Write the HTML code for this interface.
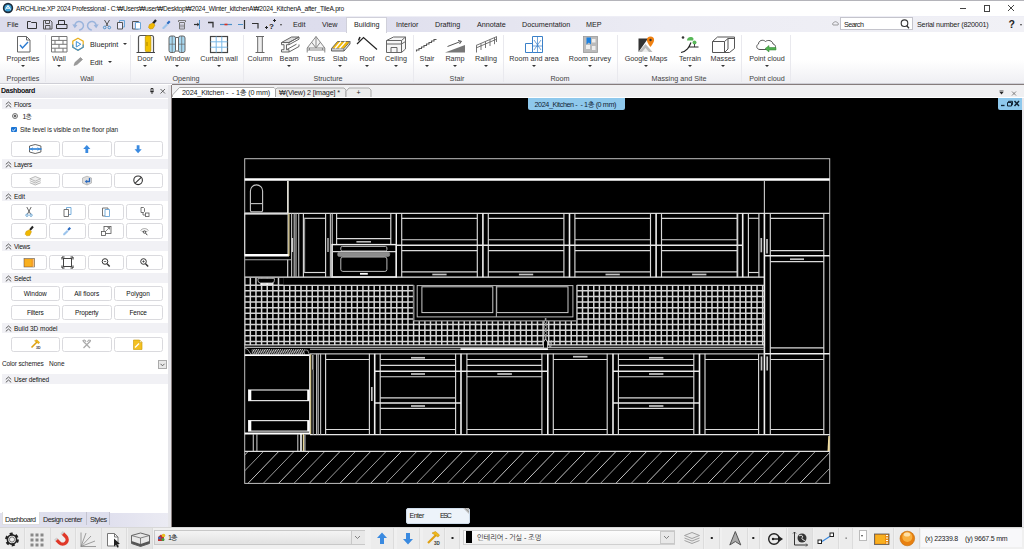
<!DOCTYPE html>
<html><head><meta charset="utf-8">
<style>
*{box-sizing:border-box;margin:0;padding:0}
html,body{width:1024px;height:549px;overflow:hidden;background:#fff}
body{font-family:"Liberation Sans","NanumGothic","Noto Sans CJK KR",sans-serif;font-size:7.2px;color:#222;position:relative}
.abs{position:absolute}
#title{left:0;top:0;width:1024px;height:16px;background:#fff;border-top:1px solid #b4b4ba}
#title .t{left:16px;top:4.200px;font-size:6.600px;color:#111;white-space:nowrap}
#menu{left:0;top:16px;width:1024px;height:16px;background:linear-gradient(90deg,#dcdcec 0,#dddded 33%,#e5e5f0 50%,#ececf4 65%,#f1f1f6 100%);border-top:1px solid #eeeef6}
.mt{top:20px;font-size:7.2px;color:#222;white-space:nowrap}
#ribbon{left:0;top:32px;width:1024px;height:52px;background:linear-gradient(#fff 0,#fff 55%,#efeff3 100%);border-bottom:1px solid #cfcfd6}
.rl{top:54px;font-size:7.2px;color:#333;white-space:nowrap;transform:translateX(-50%)}
.gl{top:73.500px;font-size:7.2px;color:#444;white-space:nowrap;transform:translateX(-50%)}
.sep{top:35px;width:1px;height:47px;background:#e9e9ee}
.arr{top:65px;width:0;height:0;border-left:2px solid transparent;border-right:2px solid transparent;border-top:2px solid #333;transform:translateX(-50%)}
#dash{left:0;top:85px;width:172px;height:442px;background:#fff;border-right:1px solid #8a8080;box-shadow:inset -3px 0 0 #e6e6ea}
#dashh{left:0;top:85px;width:168px;height:12.5px;background:linear-gradient(#f4f4f6,#e6e6ec)}
.sec{left:0;width:166px;height:10px;background:#f1f1f5;font-size:6.5px;color:#111;padding-left:12px;line-height:11.6px;white-space:nowrap}
.btn{height:13px;border:1px solid #dadade;border-radius:2.5px;background:#fff;font-size:6.5px;text-align:center;line-height:11px;color:#111}
#tabs{left:172px;top:84px;width:852px;height:14px;background:#f0f0f2;border-top:1.3px solid #857c7c}
#canvas{left:172px;top:98px;width:852px;height:429px;background:#000}
.tb{top:528px;height:21px;background:#ececec;border-right:1px solid #dcdcdc}
#bottom{left:0;top:527px;width:1024px;height:22px;background:#f0f0f0}
</style></head><body>
<div id="title" class="abs"><div class="abs t" style="letter-spacing: -0.229px;">ARCHLine.XP 2024 Professional - C:₩Users₩user₩Desktop₩2024_Winter_kitchenA₩2024_KitchenA_after_TileA.pro</div></div>
<div id="menu" class="abs"></div>
<div id="ribbon" class="abs"></div>
<div id="dash" class="abs"></div>
<div id="dashh" class="abs"></div>
<div id="tabs" class="abs"></div>
<svg class="abs" style="left:2px;top:2px" width="12" height="12" viewBox="0 0 12 12"><circle cx="6" cy="6" r="5.2" fill="#1d2b3a"></circle><circle cx="6" cy="6" r="3.6" fill="#3aa0d8"></circle><path d="M3.5 7.5L6 3.5 8.5 7.5M4.5 6.2h3" stroke="#fff" stroke-width="1" fill="none"></path></svg>
<div class="abs" style="left:959.500px;top:7.500px;width:6.500px;height:1px;background:#444"></div>
<div class="abs" style="left:983.500px;top:5px;width:6.500px;height:6.500px;border:1px solid #444"></div>
<svg class="abs" style="left:1007px;top:4px" width="8" height="8"><path d="M1 1L7 7M7 1L1 7" stroke="#444" stroke-width="1"></path></svg>
<div class="abs" style="left:346px;top:17px;width:41px;height:16px;background:#fff;border:1px solid #d0d0da;border-bottom:none"></div>
<div class="abs mt" style="left:7px">File</div>
<div class="abs mt" style="left:293px">Edit</div>
<div class="abs mt" style="left:322px">View</div>
<div class="abs mt" style="left:354px">Building</div>
<div class="abs mt" style="left:396px">Interior</div>
<div class="abs mt" style="left:435px">Drafting</div>
<div class="abs mt" style="left:477px">Annotate</div>
<div class="abs mt" style="left:522px">Documentation</div>
<div class="abs mt" style="left:586px">MEP</div>
<svg class="abs" style="left:24px;top:17px" width="265" height="15" viewBox="24 17 265 15" fill="none">
<path d="M27.5 21.5h3l1 1h5v6h-9z" stroke="#333" stroke-width="1"></path>
<path d="M43.5 20.5h7l1.5 1.500v7h-8.500z M45.500 20.500v3h4v-3 M45.500 29v-3.500h4.500v3.500" stroke="#555" stroke-width="1"></path>
<path d="M58.500 24.500v-4h6v4 M56.500 24.500h10.500v4h-10.500z" stroke="#333" stroke-width="1"></path>
<path d="M75 26.800a4.300 4.300 0 1 1 4.200 3.200" stroke="#9ab4dc" stroke-width="1.500"></path><path d="M72.300 24.300l2.500 4 2.600-3.300z" fill="#9ab4dc"></path>
<path d="M96 26.800a4.300 4.300 0 1 0 -4.200 3.200" stroke="#9ab4dc" stroke-width="1.500"></path><path d="M98.700 24.300l-2.500 4-2.600-3.300z" fill="#9ab4dc"></path>
<path d="M104.500 20l3.500 6M109.500 20l-3.500 6" stroke="#555" stroke-width="1"></path><circle cx="104.700" cy="27.500" r="1.300" stroke="#4a90c8"></circle><circle cx="109.300" cy="27.500" r="1.300" stroke="#4a90c8"></circle>
<path d="M119.500 20.500h5v6.500h-5z" stroke="#6aa6d8" stroke-width="1"></path><path d="M117.500 22.500h5v6.500h-5z" stroke="#555" stroke-width="1" fill="#eef"></path>
<path d="M132.500 21.500h6v7.500h-6z" stroke="#555" stroke-width="1"></path><path d="M135.500 22.500h5v6.500h-5z" stroke="#6aa6d8" stroke-width="1" fill="#fff"></path>
<path d="M156 20l-3 3.500" stroke="#222" stroke-width="2.200"></path><path d="M149.500 24.500l3.500-1.500 2 2-2 3.500-3 .5-1.500-1.500z" fill="#f0b800" stroke="#c89000" stroke-width=".6"></path>
<path d="M169 20.500l1.500 1.500-2.500 2.500-1.500-1.500z" fill="#2a6ac0"></path><path d="M166.500 23.500l1.500 1.500-4 4-1.500 0 0-1.500z" fill="#9cc4ec"></path>
<path d="M178.500 22v-1.500h7v1.500M179.500 22.500h5v6.500h-5z M181 24.500v3M183 24.500v3" stroke="#777" stroke-width="1"></path>
<path d="M199.500 20v9" stroke="#4a90c8" stroke-width="1"></path><path d="M194 24.500h5" stroke="#333" stroke-width="1.200"></path><path d="M197 23l2 1.500-2 1.500" stroke="#333" stroke-width=".8"></path>
<path d="M208 22.500h5v5" stroke="#333" stroke-width="1.300"></path>
<path d="M220 24.500h12" stroke="#4a90c8" stroke-width="1.200"></path><path d="M224.500 24.500h3" stroke="#e03020" stroke-width="1.600"></path>
<path d="M238 24.500h5" stroke="#4a90c8" stroke-width="1"></path><path d="M244.500 20v9" stroke="#333" stroke-width="1.200"></path>
<path d="M252 23.500h6v5" stroke="#333" stroke-width="1.200"></path>
<path d="M265 27.500h3M266.500 26v3" stroke="#222" stroke-width="1"></path><path d="M273 20.500h3M274.500 19v3" stroke="#222" stroke-width="1"></path>
</svg>
<div class="abs" style="left:269px;top:22px;font-size:8px;font-weight:bold;color:#222">?</div>
<div class="abs" style="left:280px;top:24px;width:0;height:0;border-left:1.5px solid transparent;border-right:1.5px solid transparent;border-top:2px solid #444"></div>
<div class="abs" style="left:840px;top:17px;width:73px;height:13px;background:#fff;border:1px solid #c4c4cc"></div>
<div class="abs mt" style="left: 844px; top: 19.5px; letter-spacing: -0.58px;">Search</div>
<svg class="abs" style="left:899px;top:18px" width="12" height="12" fill="none"><circle cx="5.500" cy="5.200" r="3.300" stroke="#333" stroke-width="1.100"></circle><path d="M7.800 7.800l2.200 2.400" stroke="#333" stroke-width="1.300"></path></svg>
<svg class="abs" style="left:832px;top:21px" width="7" height="6" fill="none"><path d="M1 4a1.500 1.500 0 0 1 1-2.500 1.800 1.800 0 0 1 3 0 1.500 1.500 0 0 1 1 2.500z" stroke="#777" stroke-width=".7"></path></svg>
<div class="abs mt" style="left: 917px; top: 19.5px; letter-spacing: -0.183px;">Serial number (820001)</div>
<div class="abs" style="left:1008.500px;top:17.500px;font-size:10.500px;font-weight:bold;color:#222">?</div>
<div class="abs" style="left:1020px;top:24px;width:0;height:0;border-left:1.5px solid transparent;border-right:1.5px solid transparent;border-top:2px solid #444"></div>
<div class="abs rl" style="left:23px">Properties</div>
<div class="abs arr" style="left:23px"></div>
<div class="abs rl" style="left:59px">Wall</div>
<div class="abs arr" style="left:59px"></div>
<div class="abs rl" style="left:145px">Door</div>
<div class="abs arr" style="left:145px"></div>
<div class="abs rl" style="left:177px">Window</div>
<div class="abs arr" style="left:177px"></div>
<div class="abs rl" style="left:219px">Curtain wall</div>
<div class="abs arr" style="left:219px"></div>
<div class="abs rl" style="left:260px">Column</div>
<div class="abs rl" style="left:289px">Beam</div>
<div class="abs arr" style="left:289px"></div>
<div class="abs rl" style="left:316px">Truss</div>
<div class="abs rl" style="left:340px">Slab</div>
<div class="abs arr" style="left:340px"></div>
<div class="abs rl" style="left:367px">Roof</div>
<div class="abs arr" style="left:367px"></div>
<div class="abs rl" style="left:396px">Ceiling</div>
<div class="abs arr" style="left:396px"></div>
<div class="abs rl" style="left:427px">Stair</div>
<div class="abs arr" style="left:427px"></div>
<div class="abs rl" style="left:455px">Ramp</div>
<div class="abs arr" style="left:455px"></div>
<div class="abs rl" style="left:486px">Railing</div>
<div class="abs arr" style="left:486px"></div>
<div class="abs rl" style="left:534px">Room and area</div>
<div class="abs arr" style="left:534px"></div>
<div class="abs rl" style="left:590px">Room survey</div>
<div class="abs arr" style="left:590px"></div>
<div class="abs rl" style="left:646px">Google Maps</div>
<div class="abs arr" style="left:646px"></div>
<div class="abs rl" style="left:690px">Terrain</div>
<div class="abs arr" style="left:690px"></div>
<div class="abs rl" style="left:723px">Masses</div>
<div class="abs arr" style="left:723px"></div>
<div class="abs rl" style="left:767px">Point cloud</div>
<div class="abs arr" style="left:767px"></div>
<div class="abs gl" style="left:23px">Properties</div>
<div class="abs gl" style="left:87px">Wall</div>
<div class="abs gl" style="left:186px">Opening</div>
<div class="abs gl" style="left:328px">Structure</div>
<div class="abs gl" style="left:457px">Stair</div>
<div class="abs gl" style="left:560px">Room</div>
<div class="abs gl" style="left:679px">Massing and Site</div>
<div class="abs gl" style="left:767px">Point cloud</div>
<div class="abs sep" style="left:45px"></div>
<div class="abs sep" style="left:130px"></div>
<div class="abs sep" style="left:243px"></div>
<div class="abs sep" style="left:413px"></div>
<div class="abs sep" style="left:503px"></div>
<div class="abs sep" style="left:617px"></div>
<div class="abs sep" style="left:741px"></div>
<div class="abs sep" style="left:790px"></div>
<div class="abs mt" style="left:90px;top:40px">Blueprint</div><div class="abs arr" style="left:125px;top:43px"></div>
<div class="abs mt" style="left:90px;top:58px">Edit</div><div class="abs arr" style="left:110px;top:61px"></div>
<svg class="abs" style="left:0;top:33px" width="800" height="36" viewBox="0 33 800 36" fill="none">
<!-- properties -->
<path d="M17.500 36.500h9l3.500 3.500v12h-12.500z" fill="#fff" stroke="#666" stroke-width="1"></path><path d="M26.500 36.500v3.500h3.500" stroke="#666" stroke-width="1"></path><path d="M20 45l2.500 3 5.500-6" stroke="#2a7ad0" stroke-width="1.400"></path>
<!-- wall -->
<g stroke="#777" stroke-width="1"><path d="M51.500 36.500h15.500v15.500h-15.500z" fill="#fff"></path><path d="M51.500 40.400h15.500M51.500 44.300h15.500M51.500 48.200h15.500M59 36.500v3.900M55 40.400v3.900M63 40.400v3.900M59 44.300v3.900M55 48.200v3.800M63 48.200v3.800"></path></g>
<!-- blueprint -->
<path d="M78 38.200l5.200 3v6l-5.200 3-5.200-3v-6z" stroke="#e8b020" stroke-width="1.200"></path><path d="M72.800 44.500v2.700l5.200 3 5.200-3v-2.700" stroke="#3a90d8" stroke-width="1.200"></path><path d="M76.300 41.500v5.500l4.500-2.800z" stroke="#3a90d8" stroke-width="1"></path>
<!-- edit pencil -->
<path d="M74 65.500l1-3 5.500-5 2 2-5.500 5z" fill="#999" stroke="#888" stroke-width=".6"></path>
<!-- door -->
<path d="M138.500 52v-14.500a2 2 0 0 1 2-2h11a2 2 0 0 1 2 2v14.500" stroke="#555" stroke-width="1.200" fill="#fff"></path><rect x="145.300" y="35.800" width="5.600" height="16" rx="1.500" fill="#f2c200" stroke="#b89000" stroke-width=".7"></rect><path d="M136.500 52.500h18.500" stroke="#444" stroke-width="1"></path><path d="M147 42v4" stroke="#a07800" stroke-width=".8"></path>
<!-- window -->
<g stroke="#666" stroke-width="1"><rect x="169" y="36" width="6.500" height="16.500" rx="2" fill="#a8d8f0"></rect><rect x="178.500" y="36" width="6.500" height="16.500" rx="2" fill="#a8d8f0"></rect><path d="M169 44.200h6.500M178.500 44.200h6.500M172.200 36v16.500M181.700 36v16.500" stroke-width=".7"></path><path d="M175.500 37.500h3M175.500 51h3"></path></g>
<!-- curtain wall -->
<rect x="210.500" y="36.500" width="17" height="16" fill="#fff" stroke="#444" stroke-width="1.200"></rect><path d="M216.200 36.500v16M221.800 36.500v16M210.500 41.800h17M210.500 47.200h17" stroke="#7ab8e8" stroke-width="1"></path>
<!-- column -->
<path d="M256 36.500h8M255.500 52.500h9M257.800 37v15.500M262.200 37v15.500" stroke="#666" stroke-width="1.200"></path><path d="M258.500 37h3v15h-3z" fill="#eee"></path>
<!-- beam -->
<g stroke="#666" stroke-width="1" fill="#ddd"><path d="M281.500 42.500l10-5.500h7.500l-10 5.500z"></path><path d="M281.500 42.500h7.500v2.200h-2.500v5h2.500v2.300h-7.500v-2.300h2.500v-5h-2.500z" fill="#f4f4f4"></path><path d="M289 42.500l10-5.500v2.200l-10 5.500M286.500 49.700l10-5.500M289 52l10-5.500v-2" fill="none"></path></g>
<!-- truss -->
<g stroke="#888" stroke-width="1"><path d="M316 36.500l8.800 11.500h-17.600z" fill="#f4f4f4"></path><path d="M316 36.500v11.500M311.600 42.200l4.400 5.800 4.400-5.800M307.200 48v4.500M324.800 48v4.500M307.200 50h17.600M309.500 48v2M322.500 48v2"></path></g>
<!-- slab -->
<path d="M331.500 48.500l6-7h12.500l-6 7z" fill="#f0b810" stroke="#555" stroke-width=".8"></path><path d="M335 48.500l6-7M339.500 48.500l6-7" stroke="#fff" stroke-width="1.300"></path><path d="M331.500 48.500v2.500h12.500v-2.500M344 51l6-7v-2.500" stroke="#555" stroke-width=".9" fill="#ccc"></path>
<!-- roof -->
<path d="M357 44l6.500-6.500 13.500 12" stroke="#222" stroke-width="1.200"></path><path d="M360 37l-1.500 3.500" stroke="#222" stroke-width="1.500"></path>
<!-- ceiling -->
<g stroke="#666" stroke-width="1"><path d="M386.500 40.500l7-3.500h12v12l-4 3.500h-15z" fill="#f6f6f6"></path><path d="M386.500 40.500h15l4-3.500M401.500 40.500v12M386.500 44h15l4-2.500"></path><path d="M391 52.500v-5h6v5"></path></g>
<!-- stair -->
<path d="M416.500 51.500v-1.500h2.500v-1.500h2.500v-1.500h2.500v-1.500h2.500v-1.500h2.500v-1.500h2.500v-1.500h2.500v-1.500h2.500" stroke="#555" stroke-width="1.100"></path>
<!-- ramp -->
<path d="M445 52.500l20-7.500v7.500z" fill="#777"></path><path d="M447.500 46.500l13-5M458 40.500l3.500.800-2 2.700" stroke="#555" stroke-width="1"></path>
<!-- railing -->
<path d="M476 45.500l21-9M476 48l21-9M476.500 45.500v7M481 43.500v6.500M485.500 41.500v6.500M490 39.500v6.500M494.500 37.700v6.500M496.500 37v5" stroke="#666" stroke-width=".9"></path>
<!-- room and area -->
<g stroke="#3a80c8" stroke-width="1" fill="#fff"><path d="M532.500 36.500h10v16h-10z"></path><path d="M525.500 43.500h7v9h-7z"></path><path d="M537.500 36.500v16M532.500 46h10M534 40l7 10M541 40l-7 10" stroke-width=".7"></path></g>
<!-- room survey -->
<rect x="583.500" y="36.500" width="14" height="16" fill="#bbb" stroke="#999" stroke-width=".8"></rect><path d="M586 45h4v4h-4zM592 39h3.500v3.500h-3.500zM592 46h3.500v4h-3.500z" fill="#eee"></path><path d="M586.500 37.500h4.500v7l-2.200-2-2.300 2z" fill="#1a80e0"></path>
<!-- google maps -->
<path d="M638.500 38.500h9.500l-9.500 13.500z" fill="#333"></path><path d="M638.500 52l7-8 7 8z" fill="#bbb"></path><path d="M642 52l3.500-4 3.500 4z" fill="#eee"></path><path d="M650.500 36.500a3.600 3.600 0 0 1 3.600 3.600c0 2.500-3.600 7-3.600 7s-3.600-4.500-3.600-7a3.600 3.600 0 0 1 3.600-3.600z" fill="#f08010"></path><circle cx="650.500" cy="40" r="1.200" fill="#333"></circle>
<!-- terrain -->
<path d="M681 52.500c6-1.500 8-5 10-10M689 47h9.500" stroke="#222" stroke-width="1.200"></path><circle cx="683" cy="37.500" r="1.300" fill="#333"></circle><path d="M687 40.500c0-2.500 2-4 4.500-3.500 2 .3 2.500 2 1.500 3.500z" fill="#58b858"></path><circle cx="694.500" cy="42.500" r="2" fill="#58b858"></circle><path d="M694.500 44v3" stroke="#222" stroke-width=".8"></path>
<!-- masses -->
<g stroke="#555" stroke-width="1" fill="#fff"><path d="M712.500 41.500l5-4.500h17v11.500l-5 4h-17z"></path><path d="M712.500 41.500h12v11M724.500 41.500l3.500-3v10.500l-3.500 3.500M728 38.500h6.500" fill="none"></path></g>
<!-- point cloud -->
<path d="M760 49.500c-3.500 0-4.500-4-1.500-5.500 0-3.500 4.500-5 7-2.500 2.500-2 7-1 7.500 2.500 3 .5 3.500 4.500.5 5.500z" fill="#fff" stroke="#555" stroke-width="1"></path><path d="M776 47.500h-7v-2l-4 3.200 4 3.300v-2h7z" fill="#50b050" stroke="#308030" stroke-width=".5"></path>
</svg>

<div class="abs fit" style="left: 1px; top: 86.8px; white-space: nowrap; font-size: 7px; font-weight: bold; color: rgb(17, 17, 17); letter-spacing: -0.285px;">Dashboard</div>
<svg class="abs" style="left:148px;top:87px" width="20" height="9" fill="none"><path d="M3 1.500h2v3h-2zM2.200 4.700h3.600M4 4.700v2.300" stroke="#222" stroke-width=".9"></path><path d="M12.500 2l4.500 4.500M17 2l-4.500 4.500" stroke="#555" stroke-width=".9"></path></svg>
<div class="abs sec" style="left: 2px; top: 99.3px; letter-spacing: -0.144px;"><svg class="abs" style="left:3px;top:1.5px" width="7" height="7" fill="none"><path d="M.8 3.400L3.500 1 6.200 3.400M.8 6.400L3.500 4 6.200 6.400" stroke="#333" stroke-width=".8"></path></svg>Floors</div>
<div class="abs sec" style="left: 2px; top: 159.4px; letter-spacing: -0.253px;"><svg class="abs" style="left:3px;top:1.5px" width="7" height="7" fill="none"><path d="M.8 3.400L3.500 1 6.200 3.400M.8 6.400L3.500 4 6.200 6.400" stroke="#333" stroke-width=".8"></path></svg>Layers</div>
<div class="abs sec" style="left: 2px; top: 191px; letter-spacing: -0.051px;"><svg class="abs" style="left:3px;top:1.5px" width="7" height="7" fill="none"><path d="M.8 3.400L3.500 1 6.200 3.400M.8 6.400L3.500 4 6.200 6.400" stroke="#333" stroke-width=".8"></path></svg>Edit</div>
<div class="abs sec" style="left: 2px; top: 241.3px; letter-spacing: -0.247px;"><svg class="abs" style="left:3px;top:1.5px" width="7" height="7" fill="none"><path d="M.8 3.400L3.500 1 6.200 3.400M.8 6.400L3.500 4 6.200 6.400" stroke="#333" stroke-width=".8"></path></svg>Views</div>
<div class="abs sec" style="left: 2px; top: 273px; letter-spacing: -0.18px;"><svg class="abs" style="left:3px;top:1.5px" width="7" height="7" fill="none"><path d="M.8 3.400L3.500 1 6.200 3.400M.8 6.400L3.500 4 6.200 6.400" stroke="#333" stroke-width=".8"></path></svg>Select</div>
<div class="abs sec" style="left: 2px; top: 323.3px; letter-spacing: -0.041px;"><svg class="abs" style="left:3px;top:1.5px" width="7" height="7" fill="none"><path d="M.8 3.400L3.500 1 6.200 3.400M.8 6.400L3.500 4 6.200 6.400" stroke="#333" stroke-width=".8"></path></svg>Build 3D model</div>
<div class="abs sec" style="left: 2px; top: 374px; letter-spacing: -0.155px;"><svg class="abs" style="left:3px;top:1.5px" width="7" height="7" fill="none"><path d="M.8 3.400L3.500 1 6.200 3.400M.8 6.400L3.500 4 6.200 6.400" stroke="#333" stroke-width=".8"></path></svg>User defined</div>
<div class="abs" style="left:12.300px;top:113.200px;width:6px;height:6px;border-radius:50%;border:1px solid #777;background:radial-gradient(#666 0,#666 35%,#ddd 40%,#eee 100%)"></div>
<div class="abs mt" style="left: 22.5px; top: 111.7px; font-size: 6.8px; letter-spacing: -0.836px;">1층</div>
<div class="abs" style="left:11px;top:126.500px;width:5.500px;height:5.500px;background:#1a74d4;border-radius:1px"></div><svg class="abs" style="left:11px;top:126.500px" width="6" height="6" fill="none"><path d="M1.200 2.800l1.300 1.300 2-2.500" stroke="#fff" stroke-width=".9"></path></svg>
<div class="abs mt" style="left: 20px; top: 125.7px; font-size: 6.5px; letter-spacing: -0.081px;">Site level is visible on the floor plan</div>
<div class="abs btn" style="left:10.5px;top:141.3px;width:49.5px;height:15.3px;line-height:13.3px"></div>
<div class="abs btn" style="left:62px;top:141.3px;width:49.5px;height:15.3px;line-height:13.3px"></div>
<div class="abs btn" style="left:113.5px;top:141.3px;width:49.2px;height:15.3px;line-height:13.3px"></div>
<div class="abs btn" style="left:10.5px;top:172.6px;width:49.5px;height:15.3px;line-height:13.3px"></div>
<div class="abs btn" style="left:62px;top:172.6px;width:49.5px;height:15.3px;line-height:13.3px"></div>
<div class="abs btn" style="left:113.5px;top:172.6px;width:49.2px;height:15.3px;line-height:13.3px"></div>
<div class="abs btn" style="left:10.5px;top:204.3px;width:36.9px;height:15.3px;line-height:13.3px"></div>
<div class="abs btn" style="left:49.4px;top:204.3px;width:36.2px;height:15.3px;line-height:13.3px"></div>
<div class="abs btn" style="left:87.7px;top:204.3px;width:36.3px;height:15.3px;line-height:13.3px"></div>
<div class="abs btn" style="left:126px;top:204.3px;width:36.7px;height:15.3px;line-height:13.3px"></div>
<div class="abs btn" style="left:10.5px;top:223.3px;width:36.9px;height:15.3px;line-height:13.3px"></div>
<div class="abs btn" style="left:49.4px;top:223.3px;width:36.2px;height:15.3px;line-height:13.3px"></div>
<div class="abs btn" style="left:87.7px;top:223.3px;width:36.3px;height:15.3px;line-height:13.3px"></div>
<div class="abs btn" style="left:126px;top:223.3px;width:36.7px;height:15.3px;line-height:13.3px"></div>
<div class="abs btn" style="left:10.5px;top:254.8px;width:36.9px;height:15.3px;line-height:13.3px"></div>
<div class="abs btn" style="left:49.4px;top:254.8px;width:36.2px;height:15.3px;line-height:13.3px"></div>
<div class="abs btn" style="left:87.7px;top:254.8px;width:36.3px;height:15.3px;line-height:13.3px"></div>
<div class="abs btn" style="left:126px;top:254.8px;width:36.7px;height:15.3px;line-height:13.3px"></div>
<div class="abs btn" style="left: 10.5px; top: 286px; width: 49.5px; height: 15.3px; line-height: 13.3px; letter-spacing: -0.021px;">Window</div>
<div class="abs btn" style="left: 62px; top: 286px; width: 49.5px; height: 15.3px; line-height: 13.3px; letter-spacing: 0.006px;">All floors</div>
<div class="abs btn" style="left: 113.5px; top: 286px; width: 49.2px; height: 15.3px; line-height: 13.3px; letter-spacing: 0px;">Polygon</div>
<div class="abs btn" style="left: 10.5px; top: 305.2px; width: 49.5px; height: 15.3px; line-height: 13.3px; letter-spacing: -0.172px;">Filters</div>
<div class="abs btn" style="left: 62px; top: 305.2px; width: 49.5px; height: 15.3px; line-height: 13.3px; letter-spacing: -0.135px;">Property</div>
<div class="abs btn" style="left: 113.5px; top: 305.2px; width: 49.2px; height: 15.3px; line-height: 13.3px; letter-spacing: -0.216px;">Fence</div>
<div class="abs btn" style="left:10.5px;top:336.6px;width:49.5px;height:15.3px;line-height:13.3px"></div>
<div class="abs btn" style="left:62px;top:336.6px;width:49.5px;height:15.3px;line-height:13.3px"></div>
<div class="abs btn" style="left:113.5px;top:336.6px;width:49.2px;height:15.3px;line-height:13.3px"></div>
<div class="abs mt" style="left: 2px; top: 359.7px; font-size: 6.5px; letter-spacing: -0.143px;">Color schemes</div><div class="abs mt" style="left: 49px; top: 359.7px; font-size: 6.5px; letter-spacing: -0.012px;">None</div>
<div class="abs" style="left:158px;top:359.500px;width:9px;height:9px;border:1px solid #aaa;background:#e8e8e8"></div><svg class="abs" style="left:158px;top:359.500px" width="9" height="9" fill="none"><path d="M2.500 3.800l2 2 2-2" stroke="#555" stroke-width=".9"></path></svg>
<svg class="abs" style="left:0;top:140px" width="170" height="215" viewBox="0 140 170 215" fill="none">
<!-- floors row cy=149 -->
<path d="M29.500 146l5.700-1.500 5.700 1.500v6l-5.700 1.500-5.700-1.500z" fill="#fff" stroke="#555" stroke-width=".9"></path><path d="M29 149h12.500" stroke="#2a80d8" stroke-width="1.600"></path><path d="M33 147.500l-1.800 1.500 1.800 1.500M37.500 147.500l1.800 1.500-1.800 1.500" stroke="#2a80d8" stroke-width=".7"></path>
<path d="M86.800 145l-3.600 4h2.200v4h2.800v-4h2.200z" fill="#3a8ae0"></path>
<path d="M138.100 153.200l-3.600-4h2.200v-4h2.800v4h2.200z" fill="#3a8ae0"></path>
<!-- layers row cy=180.3 -->
<path d="M35.300 176.500l5.500 2.300-5.500 2.300-5.500-2.300zM29.800 180.700l5.500 2.300 5.500-2.300M29.800 182.700l5.500 2.300 5.500-2.300" stroke="#aaa" stroke-width=".8" fill="#eee"></path>
<path d="M82.500 178l4.500-1.800 4.500 1.800v5l-4.500 2-4.500-2z" fill="#ddd" stroke="#aaa" stroke-width=".7"></path><path d="M87 180v5" stroke="#aaa" stroke-width=".7"></path><path d="M89.500 178v3.500h-3.500" stroke="#2a6ac0" stroke-width="1.300"></path><path d="M86.800 179.800l-2 1.700 2 1.700z" fill="#2a6ac0"></path>
<circle cx="138.100" cy="180.300" r="4.300" stroke="#333" stroke-width="1.100"></circle><path d="M135 183.300l6.200-6" stroke="#333" stroke-width="1.100"></path>
<!-- edit row1 cy=212 -->
<path d="M26.800 207l3.700 7M31.200 207l-3.700 7" stroke="#555" stroke-width=".9"></path><circle cx="27" cy="215.200" r="1.200" stroke="#4a90c8" stroke-width=".8"></circle><circle cx="31" cy="215.200" r="1.200" stroke="#4a90c8" stroke-width=".8"></circle>
<path d="M66.500 207.500h4.500v7h-4.500z" stroke="#6aa6d8" stroke-width=".9"></path><path d="M64 209.500h4.500v7h-4.500z" stroke="#666" stroke-width=".9" fill="#fff"></path>
<path d="M102.500 208h5.500v8h-5.500z" stroke="#666" stroke-width=".9"></path><path d="M105 209.500h4.500v7h-4.500z" stroke="#6aa6d8" stroke-width=".9" fill="#fff"></path>
<path d="M141 207.500h2.500l1 1v3l-1 1h-2.500zM143 212.500v2.500h2.500" stroke="#555" stroke-width=".8"></path><rect x="145.500" y="213" width="3.500" height="3.500" stroke="#555" stroke-width=".8"></rect>
<!-- edit row2 cy=231 -->
<path d="M33 226.500l-3 3.500" stroke="#222" stroke-width="2"></path><path d="M26 231.500l3.500-1.800 2 2-1.800 3.800-3 .3-1.500-1.500z" fill="#f0b800" stroke="#c89000" stroke-width=".5"></path>
<path d="M69.500 227l1.500 1.500-2.200 2.200-1.500-1.500z" fill="#2a6ac0"></path><path d="M67 230l1.500 1.500-3.800 3.800h-1.500v-1.500z" fill="#9cc4ec"></path>
<rect x="104" y="226.500" width="7" height="7" stroke="#555" stroke-width=".8"></rect><rect x="101.500" y="231.500" width="4" height="4" stroke="#555" stroke-width=".8" fill="#fff"></rect><path d="M106 231l3.500-3.500M107.500 227.500h2v2" stroke="#555" stroke-width=".7"></path>
<path d="M140.500 230.500c2-2.500 6-2.500 8 0M141.500 231c1.500 1 4.500 1 6 0" stroke="#888" stroke-width=".8"></path><circle cx="144.500" cy="232" r="1.300" stroke="#444" stroke-width=".8"></circle><path d="M145.500 233l1.800 2.200" stroke="#444" stroke-width="1"></path>
<!-- views row cy=262.5 -->
<rect x="24" y="258.500" width="10.500" height="8.500" fill="#f09010" stroke="#666" stroke-width=".6"></rect><rect x="24.700" y="259.200" width="7" height="7.100" fill="#f8b020"></rect><path d="M32.700 260h1.300M32.700 262h1.300M32.700 264h1.300M32.700 266h1.300" stroke="#fff" stroke-width=".9"></path>
<rect x="63.500" y="258.500" width="8" height="8" stroke="#444" stroke-width="1"></rect><path d="M62 259.500v-2.500h2.500M70.500 257h2.500v2.500M73 265.500v2.500h-2.500M64.500 268h-2.500v-2.500" stroke="#222" stroke-width="1"></path>
<circle cx="105" cy="261.500" r="2.800" stroke="#333" stroke-width="1"></circle><path d="M107 263.800l2.700 2.800" stroke="#333" stroke-width="1.400"></path><path d="M103.800 261.500h2.400" stroke="#333" stroke-width=".7"></path>
<circle cx="143.500" cy="261.500" r="2.800" stroke="#333" stroke-width="1"></circle><path d="M145.500 263.800l2.700 2.800" stroke="#333" stroke-width="1.400"></path><path d="M142.300 261.500h2.400M143.500 260.300v2.400" stroke="#333" stroke-width=".7"></path>
<!-- build row cy=344.3 -->
<path d="M31.500 347.500l5.500-5.500" stroke="#e0a010" stroke-width="1.600"></path><path d="M34.500 340.800l2.300-1 2.800 2.500-1 1.400z" fill="#f0b818" stroke="#c08800" stroke-width=".4"></path>
<path d="M83 341l7 7M90.500 341l-7 7" stroke="#aaa" stroke-width="1.300"></path><path d="M82.500 340.500l2.500-.5 1 2M91 340.500l-2.500-.5-1 2" stroke="#999" stroke-width=".9"></path>
<path d="M133.500 340h6l2.500 2.500v7h-8.500z" fill="#f4c020" stroke="#c89800" stroke-width=".6"></path><path d="M139.500 340v2.500h2.500z" fill="#fff" stroke="#c89800" stroke-width=".5"></path><path d="M135 347.500l4-4" stroke="#fff" stroke-width="1.200"></path>
</svg>
<div class="abs" style="left:36px;top:346px;font-size:3.500px;font-weight:bold;color:#333">3D</div>

<div class="abs" style="left:0;top:512.500px;width:168px;height:14.500px;background:linear-gradient(90deg,#e0e0ee 0,#e0e0ee 65%,#ebebf3 100%)"></div>
<div class="abs" style="left:2px;top:512px;width:38px;height:13px;background:#fff;border:1px solid #ddd;border-top:none"></div>
<div class="abs" style="left:40px;top:512px;width:47px;height:13px;background:#dedfed;border-right:1px solid #c4c4d0"></div><div class="abs" style="left:87px;top:512px;width:23px;height:13px;background:#dedfed;border-right:1px solid #c4c4d0"></div>
<div class="abs mt" style="left: 5px; top: 515px; font-size: 7.2px; letter-spacing: -0.519px;">Dashboard</div>
<div class="abs mt" style="left: 43px; top: 515px; font-size: 7.2px; letter-spacing: -0.412px;">Design center</div>
<div class="abs mt" style="left: 90px; top: 515px; font-size: 7.2px; letter-spacing: -0.513px;">Styles</div>
<svg class="abs" style="left:172px;top:85px" width="260" height="13" viewBox="172 85 260 13" fill="none">
<path d="M172.500 98v-3l7-7.500h94.500l1.500 1.500v9z" fill="#fff" stroke="#999" stroke-width=".8"></path>
<path d="M275.500 98v-8.500l1.500-1.500h67l2 2v8" fill="#ececec" stroke="#999" stroke-width=".8"></path>
<path d="M346 98v-6.500l3-3.500h20l2 2v8" fill="#ececec" stroke="#999" stroke-width=".8"></path>
</svg>
<div class="abs mt" style="left: 182px; top: 88px; font-size: 7.2px; letter-spacing: -0.157px;">2024_Kitchen -&nbsp; - 1층 (0 mm)</div>
<div class="abs mt" style="left: 279px; top: 88px; font-size: 7.2px; letter-spacing: -0.125px;">₩(View) 2 [image] *</div>
<div class="abs mt" style="left:356.500px;top:88.500px;font-size:7px">+</div>
<svg class="abs" style="left:998px;top:89.500px" width="24" height="8" fill="none"><path d="M1.500 2h4l-2 2.500z" fill="#222"></path><path d="M1.500 1h4" stroke="#222" stroke-width=".8"></path><path d="M14 1.500l4 4M18 1.500l-4 4" stroke="#666" stroke-width=".8"></path></svg>
<div id="canvas" class="abs"></div>
<svg class="abs" style="left:172px;top:98px" width="852" height="429" viewBox="172 98 852 429" fill="none" shape-rendering="auto"><defs>
<pattern id="tile" x="244.7" y="285.2" width="5.63" height="5.63" patternUnits="userSpaceOnUse"><rect width="5.63" height="5.63" fill="#000"></rect><path d="M0 0.1H5.63M0.1 0V5.63" stroke="#e6e6e6" stroke-width="1.9" fill="none"></path></pattern>
<pattern id="hatch" x="244.7" y="483.4" width="15.25" height="15.25" patternUnits="userSpaceOnUse"><rect width="15.25" height="15.25" fill="#000"></rect><path d="M-1 16.25L16.25 -1" stroke="#c8c8c8" stroke-width="1"></path></pattern>
<pattern id="hatch2" x="251.7" y="349" width="2.2" height="5.6" patternUnits="userSpaceOnUse"><rect width="2.2" height="5.6" fill="#000"></rect><path d="M-0.5 5.6L2.7 0M-2.7 5.6L0.5 0M1.7 5.6L4.9 0" stroke="#ddd" stroke-width="0.9"></path></pattern>
</defs>
<rect x="244.7" y="158.7" width="585.0" height="324.7" rx="0" fill="none" stroke="#c0c0c0" stroke-width="1"></rect>
<path d="M244.7 179.5L829.7 179.5" stroke="#ffffff" stroke-width="2.6"></path>
<path d="M287.9 181.0L287.9 213.5" stroke="#f8f6ec" stroke-width="1.6"></path>
<path d="M244.7 213.6L288.0 213.6" stroke="#ffffff" stroke-width="2"></path>
<path d="M250.4 210.3V191a6.1 6.1 0 0 1 12.2 0V210.3a1.500 1.500 0 0 1 -1.500 1.500H251.9a1.500 1.500 0 0 1 -1.500 -1.500z" fill="none" stroke="#c8c8c8" stroke-width="1.100"></path>
<path d="M250.4 203.6L262.6 203.6" stroke="#bbb" stroke-width="1.15"></path>
<path d="M764.4 181.0L764.4 213.3" stroke="#c8c8c8" stroke-width="1.15"></path>
<path d="M288.0 213.3L829.7 213.3" stroke="#dadada" stroke-width="1.2"></path>
<path d="M244.7 277.2L764.4 277.2" stroke="#e8e8e8" stroke-width="1.3"></path>
<rect x="244.7" y="213.6" width="43.3" height="41.7" rx="0" fill="none" stroke="#dadada" stroke-width="1"></rect>
<path d="M244.7 255.3L289.0 255.3" stroke="#ffffff" stroke-width="2.4"></path>
<path d="M244.7 259.7L292.0 259.7" stroke="#aaa" stroke-width="1.15"></path>
<path d="M287.7 259.7L287.7 277.2" stroke="#dadada" stroke-width="1.15"></path>
<path d="M288.9 213.5L288.9 256.0" stroke="#f0e0a0" stroke-width="1.2"></path>
<path d="M291.6 213.3L291.6 277.2" stroke="#bdbdbd" stroke-width="1.15"></path>
<path d="M294.2 213.3L294.2 277.2" stroke="#bdbdbd" stroke-width="1.15"></path>
<path d="M296.0 213.3L296.0 277.2" stroke="#bdbdbd" stroke-width="1.15"></path>
<path d="M298.7 213.3L298.7 277.2" stroke="#bdbdbd" stroke-width="1.15"></path>
<path d="M292.3 238.0L292.3 252.0" stroke="#ccc" stroke-width="1.6"></path>
<path d="M303.4 213.3L303.4 277.2" stroke="#dadada" stroke-width="1.15"></path>
<path d="M325.6 213.3L325.6 277.2" stroke="#dadada" stroke-width="1.15"></path>
<path d="M303.4 218.3L325.6 218.3" stroke="#dadada" stroke-width="1.15"></path>
<path d="M303.4 272.5L325.6 272.5" stroke="#dadada" stroke-width="1.15"></path>
<path d="M304.6 218.3L304.6 272.5" stroke="#999" stroke-width="1.15"></path>
<path d="M328.0 238.0L328.0 252.0" stroke="#aaa" stroke-width="1.6"></path>
<path d="M330.4 213.3L330.4 277.2" stroke="#bbb" stroke-width="1.15"></path>
<path d="M332.2 213.3L332.2 277.2" stroke="#ccc" stroke-width="1.15"></path>
<path d="M336.6 213.3L336.6 244.0" stroke="#dadada" stroke-width="1.15"></path>
<path d="M390.8 213.3L390.8 244.0" stroke="#dadada" stroke-width="1.15"></path>
<path d="M336.6 218.3L390.8 218.3" stroke="#dadada" stroke-width="1.15"></path>
<path d="M336.6 238.6L390.8 238.6" stroke="#dadada" stroke-width="1.15"></path>
<path d="M356.4 241.8L371.0 241.8" stroke="#bbb" stroke-width="1.6"></path>
<rect x="332.0" y="244.6" width="64.3" height="32.4" rx="0" fill="none" stroke="#eee" stroke-width="1.4"></rect>
<rect x="340.8" y="246.4" width="46.1" height="4.6" rx="1.5" fill="none" stroke="#bbb" stroke-width="1"></rect>
<path d="M332.0 251.6L396.3 251.6" stroke="#d8d8d8" stroke-width="1.15"></path>
<rect x="337.7" y="252.2" width="52.0" height="4.2" rx="1.5" fill="#8c8c8c" stroke="#999" stroke-width="0.6"></rect>
<rect x="340.8" y="257.0" width="46.1" height="14.4" rx="2" fill="none" stroke="#bbb" stroke-width="1"></rect>
<path d="M360.0 273.8L367.8 273.8" stroke="#ffffff" stroke-width="1.8"></path>
<path d="M396.3 213.3L396.3 277.2" stroke="#eee" stroke-width="1.4"></path>
<path d="M482.9 213.3L482.9 277.2" stroke="#f0f0f0" stroke-width="1.6"></path>
<path d="M401.7 213.3L401.7 277.2" stroke="#dadada" stroke-width="1.15"></path>
<path d="M477.3 213.3L477.3 277.2" stroke="#dadada" stroke-width="1.15"></path>
<path d="M401.7 218.3L477.3 218.3" stroke="#dadada" stroke-width="1.15"></path>
<path d="M401.7 239.7L477.3 239.7" stroke="#dadada" stroke-width="1.15"></path>
<path d="M401.7 250.6L477.3 250.6" stroke="#dadada" stroke-width="1.15"></path>
<path d="M401.7 271.9L477.3 271.9" stroke="#dadada" stroke-width="1.15"></path>
<path d="M432.3 274.5L446.6 274.5" stroke="#c4c4c4" stroke-width="1.7"></path>
<path d="M569.5 213.3L569.5 277.2" stroke="#f0f0f0" stroke-width="1.6"></path>
<path d="M488.3 213.3L488.3 277.2" stroke="#dadada" stroke-width="1.15"></path>
<path d="M563.9 213.3L563.9 277.2" stroke="#dadada" stroke-width="1.15"></path>
<path d="M488.3 218.3L563.9 218.3" stroke="#dadada" stroke-width="1.15"></path>
<path d="M488.3 239.7L563.9 239.7" stroke="#dadada" stroke-width="1.15"></path>
<path d="M488.3 250.6L563.9 250.6" stroke="#dadada" stroke-width="1.15"></path>
<path d="M488.3 271.9L563.9 271.9" stroke="#dadada" stroke-width="1.15"></path>
<path d="M518.9 274.5L533.2 274.5" stroke="#c4c4c4" stroke-width="1.7"></path>
<path d="M656.1 213.3L656.1 277.2" stroke="#f0f0f0" stroke-width="1.6"></path>
<path d="M574.9 213.3L574.9 277.2" stroke="#dadada" stroke-width="1.15"></path>
<path d="M650.5 213.3L650.5 277.2" stroke="#dadada" stroke-width="1.15"></path>
<path d="M574.9 218.3L650.5 218.3" stroke="#dadada" stroke-width="1.15"></path>
<path d="M574.9 239.7L650.5 239.7" stroke="#dadada" stroke-width="1.15"></path>
<path d="M574.9 250.6L650.5 250.6" stroke="#dadada" stroke-width="1.15"></path>
<path d="M574.9 271.9L650.5 271.9" stroke="#dadada" stroke-width="1.15"></path>
<path d="M605.5 274.5L619.8 274.5" stroke="#c4c4c4" stroke-width="1.7"></path>
<path d="M742.7 213.3L742.7 277.2" stroke="#f0f0f0" stroke-width="1.6"></path>
<path d="M661.5 213.3L661.5 277.2" stroke="#dadada" stroke-width="1.15"></path>
<path d="M737.1 213.3L737.1 277.2" stroke="#dadada" stroke-width="1.15"></path>
<path d="M661.5 218.3L737.1 218.3" stroke="#dadada" stroke-width="1.15"></path>
<path d="M661.5 239.7L737.1 239.7" stroke="#dadada" stroke-width="1.15"></path>
<path d="M661.5 250.6L737.1 250.6" stroke="#dadada" stroke-width="1.15"></path>
<path d="M661.5 271.9L737.1 271.9" stroke="#dadada" stroke-width="1.15"></path>
<path d="M692.1 274.5L706.4 274.5" stroke="#c4c4c4" stroke-width="1.7"></path>
<path d="M396.3 245.3L742.7 245.3" stroke="#eaeaea" stroke-width="1.5"></path>
<path d="M737.7 213.3L737.7 277.2" stroke="#dadada" stroke-width="1.15"></path>
<path d="M748.4 213.3L748.4 277.2" stroke="#dadada" stroke-width="1.15"></path>
<path d="M758.9 213.3L758.9 277.2" stroke="#dadada" stroke-width="1.15"></path>
<path d="M748.4 218.3L758.9 218.3" stroke="#dadada" stroke-width="1.15"></path>
<path d="M748.4 272.5L758.9 272.5" stroke="#dadada" stroke-width="1.15"></path>
<path d="M761.3 238.0L761.3 252.3" stroke="#c4c4c4" stroke-width="1.7"></path>
<path d="M767.0 239.0L767.0 253.4" stroke="#c4c4c4" stroke-width="1.7"></path>
<path d="M764.4 213.3L764.4 434.7" stroke="#f0f0f0" stroke-width="1.6"></path>
<path d="M770.3 213.3L770.3 434.7" stroke="#dadada" stroke-width="1.15"></path>
<path d="M823.8 213.3L823.8 434.7" stroke="#dadada" stroke-width="1.15"></path>
<path d="M770.3 218.4L823.8 218.4" stroke="#dadada" stroke-width="1.15"></path>
<path d="M770.3 250.6L823.8 250.6" stroke="#dadada" stroke-width="1.15"></path>
<path d="M764.4 255.8L829.7 255.8" stroke="#f0f0f0" stroke-width="1.6"></path>
<path d="M790.0 259.2L804.0 259.2" stroke="#c4c4c4" stroke-width="1.7"></path>
<path d="M770.3 261.6L823.8 261.6" stroke="#dadada" stroke-width="1.15"></path>
<path d="M770.3 347.8L823.8 347.8" stroke="#dadada" stroke-width="1.15"></path>
<path d="M764.4 353.8L829.7 353.8" stroke="#f0f0f0" stroke-width="1.6"></path>
<path d="M770.3 359.5L823.8 359.5" stroke="#dadada" stroke-width="1.15"></path>
<path d="M770.3 429.5L823.8 429.5" stroke="#dadada" stroke-width="1.15"></path>
<clipPath id="tc"><path d="M244.7 277.8h38.5v7.4h130.5v35.7h163.1v-35.7h187.6v59.8H244.7z"></path></clipPath>
<path clip-path="url(#tc)" d="M244.70 277V346M250.33 277V346M255.96 277V346M261.59 277V346M267.22 277V346M272.85 277V346M278.48 277V346M284.11 277V346M289.74 277V346M295.37 277V346M301.00 277V346M306.63 277V346M312.26 277V346M317.89 277V346M323.52 277V346M329.15 277V346M334.78 277V346M340.41 277V346M346.04 277V346M351.67 277V346M357.30 277V346M362.93 277V346M368.56 277V346M374.19 277V346M379.82 277V346M385.45 277V346M391.08 277V346M396.71 277V346M402.34 277V346M407.97 277V346M413.60 277V346M419.23 277V346M424.86 277V346M430.49 277V346M436.12 277V346M441.75 277V346M447.38 277V346M453.01 277V346M458.64 277V346M464.27 277V346M469.90 277V346M475.53 277V346M481.16 277V346M486.79 277V346M492.42 277V346M498.05 277V346M503.68 277V346M509.31 277V346M514.94 277V346M520.57 277V346M526.20 277V346M531.83 277V346M537.46 277V346M543.09 277V346M548.72 277V346M554.35 277V346M559.98 277V346M565.61 277V346M571.24 277V346M576.87 277V346M582.50 277V346M588.13 277V346M593.76 277V346M599.39 277V346M605.02 277V346M610.65 277V346M616.28 277V346M621.91 277V346M627.54 277V346M633.17 277V346M638.80 277V346M644.43 277V346M650.06 277V346M655.69 277V346M661.32 277V346M666.95 277V346M672.58 277V346M678.21 277V346M683.84 277V346M689.47 277V346M695.10 277V346M700.73 277V346M706.36 277V346M711.99 277V346M717.62 277V346M723.25 277V346M728.88 277V346M734.51 277V346M740.14 277V346M745.77 277V346M751.40 277V346M757.03 277V346M762.66 277V346M244 285.20H765M244 290.83H765M244 296.46H765M244 302.09H765M244 307.72H765M244 313.35H765M244 318.98H765M244 324.61H765M244 330.24H765M244 335.87H765M244 341.50H765" stroke="#d4d4d4" stroke-width="1.5"></path>
<path d="M283.0 285.2L413.7 285.2" stroke="#ddd" stroke-width="1.15"></path>
<path d="M576.8 285.2L764.4 285.2" stroke="#ddd" stroke-width="1.15"></path>
<path d="M258 278.3v2.2a2.5 2.5 0 0 0 2.5 2.5h11.4a2.5 2.5 0 0 0 2.5 -2.5v-2.2z" fill="#000" stroke="#aaa" stroke-width="1"></path>
<path d="M260.3 284.0L272.8 284.0" stroke="#ffffff" stroke-width="1.6"></path>
<rect x="413.7" y="284.6" width="163.1" height="36.3" fill="#000"></rect>
<rect x="417.2" y="285.6" width="155.7" height="31.3" rx="0" fill="none" stroke="#bbb" stroke-width="1"></rect>
<rect x="421.9" y="286.8" width="70.9" height="25.8" rx="0" fill="none" stroke="#ccc" stroke-width="1"></rect>
<rect x="496.7" y="286.8" width="71.3" height="25.8" rx="0" fill="none" stroke="#ccc" stroke-width="1"></rect>
<path d="M496.4 285.6L496.4 316.9" stroke="#aaa" stroke-width="1.15"></path>
<path d="M413.9 285.0L413.9 320.9" stroke="#999" stroke-width="1.15"></path>
<path d="M576.6 285.0L576.6 320.9" stroke="#999" stroke-width="1.15"></path>
<path d="M413.7 320.9L576.8 320.9" stroke="#999" stroke-width="1.15"></path>
<path d="M244.7 344.9L764.4 344.9" stroke="#ddd" stroke-width="1.15"></path>
<path d="M244.7 347.3L764.4 347.3" stroke="#b0b0b0" stroke-width="1.15"></path>
<path d="M310.0 349.2L764.4 349.2" stroke="#b8b8b8" stroke-width="1.15"></path>
<path d="M460.5 349.1L548.0 349.1" stroke="#ffffff" stroke-width="1.8"></path>
<path d="M545.6 318.0L545.6 348.0" stroke="#999" stroke-width="1.6"></path>
<path d="M543.5 348v-6l2-3 2 3v6z" fill="#000" stroke="#ddd" stroke-width="0.8"></path>
<circle cx="545.6" cy="322" r="1.3" fill="#000" stroke="#bbb" stroke-width="0.7"></circle><circle cx="545.6" cy="327" r="1.5" fill="#000" stroke="#bbb" stroke-width="0.7"></circle><circle cx="545.6" cy="333" r="1.5" fill="#000" stroke="#bbb" stroke-width="0.7"></circle>
<path d="M549.5 346.5l1.5-6 1 .5-1.2 5.8z" fill="none" stroke="#ccc" stroke-width="0.7"></path>
<rect x="251.7" y="349" width="53.1" height="5.6" fill="url(#hatch2)"></rect>
<path d="M244.7 348l3 1.5 3.5 5M309.5 354.5l-2-4.5h-2.5" fill="none" stroke="#bbb" stroke-width="0.8"></path>
<path d="M244.7 355.2L310.0 355.2" stroke="#ffffff" stroke-width="1.8"></path>
<path d="M309.6 355.0L309.6 433.4" stroke="#dadada" stroke-width="1.15"></path>
<path d="M310.7 354.0L310.7 434.0" stroke="#f0e0a0" stroke-width="1.1"></path>
<rect x="248.6" y="390.0" width="60.9" height="10.6" rx="0" fill="none" stroke="#e0e0e0" stroke-width="1.2"></rect>
<path d="M250.0 390.0L250.0 400.6" stroke="#ffffff" stroke-width="2.6"></path>
<path d="M308.3 390.0L308.3 400.6" stroke="#ffffff" stroke-width="2.2"></path>
<rect x="248.6" y="420.6" width="60.9" height="10.5" rx="0" fill="none" stroke="#e0e0e0" stroke-width="1.2"></rect>
<path d="M250.0 420.6L250.0 431.1" stroke="#ffffff" stroke-width="2.6"></path>
<path d="M308.3 420.6L308.3 431.1" stroke="#ffffff" stroke-width="2.2"></path>
<path d="M244.7 433.4L310.0 433.4" stroke="#ffffff" stroke-width="2"></path>
<path d="M253.3 434.0L253.3 451.4" stroke="#bbb" stroke-width="1.15"></path>
<path d="M256.9 434.0L256.9 451.4" stroke="#bbb" stroke-width="1.15"></path>
<path d="M297.8 434.0L297.8 451.4" stroke="#bbb" stroke-width="1.15"></path>
<path d="M301.0 434.0L301.0 451.4" stroke="#ffffff" stroke-width="1.6"></path>
<path d="M303.4 434.0L303.4 451.4" stroke="#f0e0a0" stroke-width="1.15"></path>
<path d="M304.9 434.7L304.9 451.4" stroke="#ccc" stroke-width="1.15"></path>
<path d="M310.0 353.8L764.4 353.8" stroke="#bcbcbc" stroke-width="1.2"></path>
<path d="M310.0 434.7L829.7 434.7" stroke="#e8e8e8" stroke-width="1.3"></path>
<path d="M312.8 355.0L312.8 369.7" stroke="#aaa" stroke-width="1.5"></path>
<path d="M313.2 369.7L313.2 434.7" stroke="#999" stroke-width="1.15"></path>
<path d="M316.6 353.8L316.6 434.7" stroke="#bdbdbd" stroke-width="1.15"></path>
<path d="M318.2 353.8L318.2 434.7" stroke="#bdbdbd" stroke-width="1.15"></path>
<path d="M320.6 353.8L320.6 434.7" stroke="#bdbdbd" stroke-width="1.15"></path>
<path d="M325.6 353.8L325.6 434.7" stroke="#dadada" stroke-width="1.15"></path>
<path d="M374.7 353.8L374.7 434.7" stroke="#f0f0f0" stroke-width="1.6"></path>
<path d="M461.0 353.8L461.0 434.7" stroke="#f0f0f0" stroke-width="1.6"></path>
<path d="M547.8 353.8L547.8 434.7" stroke="#f0f0f0" stroke-width="1.6"></path>
<path d="M613.0 353.8L613.0 434.7" stroke="#f0f0f0" stroke-width="1.6"></path>
<path d="M699.5 353.8L699.5 434.7" stroke="#f0f0f0" stroke-width="1.6"></path>
<path d="M369.4 353.8L369.4 434.7" stroke="#dadada" stroke-width="1.15"></path>
<path d="M326.0 359.5L369.4 359.5" stroke="#dadada" stroke-width="1.15"></path>
<path d="M325.6 429.5L369.4 429.5" stroke="#dadada" stroke-width="1.15"></path>
<path d="M371.8 387.0L371.8 401.0" stroke="#c4c4c4" stroke-width="1.7"></path>
<path d="M380.2 353.8L380.2 434.7" stroke="#dadada" stroke-width="1.15"></path>
<path d="M455.6 353.8L455.6 434.7" stroke="#dadada" stroke-width="1.15"></path>
<path d="M380.2 359.5L455.6 359.5" stroke="#dadada" stroke-width="1.15"></path>
<path d="M380.2 365.3L455.6 365.3" stroke="#dadada" stroke-width="1.15"></path>
<path d="M380.2 376.7L455.6 376.7" stroke="#dadada" stroke-width="1.15"></path>
<path d="M380.2 397.8L455.6 397.8" stroke="#dadada" stroke-width="1.15"></path>
<path d="M380.2 408.3L455.6 408.3" stroke="#dadada" stroke-width="1.15"></path>
<path d="M380.2 429.5L455.6 429.5" stroke="#dadada" stroke-width="1.15"></path>
<path d="M374.7 371.2L461.0 371.2" stroke="#eaeaea" stroke-width="1.5"></path>
<path d="M374.7 403.0L461.0 403.0" stroke="#eaeaea" stroke-width="1.5"></path>
<path d="M411.0 357.8L425.0 357.8" stroke="#c4c4c4" stroke-width="1.7"></path>
<path d="M411.0 374.0L425.0 374.0" stroke="#c4c4c4" stroke-width="1.7"></path>
<path d="M411.0 406.0L425.0 406.0" stroke="#c4c4c4" stroke-width="1.7"></path>
<path d="M618.4 353.8L618.4 434.7" stroke="#dadada" stroke-width="1.15"></path>
<path d="M693.8 353.8L693.8 434.7" stroke="#dadada" stroke-width="1.15"></path>
<path d="M618.4 359.5L693.8 359.5" stroke="#dadada" stroke-width="1.15"></path>
<path d="M618.4 365.3L693.8 365.3" stroke="#dadada" stroke-width="1.15"></path>
<path d="M618.4 376.7L693.8 376.7" stroke="#dadada" stroke-width="1.15"></path>
<path d="M618.4 397.8L693.8 397.8" stroke="#dadada" stroke-width="1.15"></path>
<path d="M618.4 408.3L693.8 408.3" stroke="#dadada" stroke-width="1.15"></path>
<path d="M618.4 429.5L693.8 429.5" stroke="#dadada" stroke-width="1.15"></path>
<path d="M613.0 371.2L699.5 371.2" stroke="#eaeaea" stroke-width="1.5"></path>
<path d="M613.0 403.0L699.5 403.0" stroke="#eaeaea" stroke-width="1.5"></path>
<path d="M649.0 357.8L663.4 357.8" stroke="#c4c4c4" stroke-width="1.7"></path>
<path d="M649.0 374.0L663.4 374.0" stroke="#c4c4c4" stroke-width="1.7"></path>
<path d="M649.0 406.0L663.4 406.0" stroke="#c4c4c4" stroke-width="1.7"></path>
<path d="M466.9 353.8L466.9 434.7" stroke="#dadada" stroke-width="1.15"></path>
<path d="M541.9 353.8L541.9 434.7" stroke="#dadada" stroke-width="1.15"></path>
<path d="M466.9 359.5L541.9 359.5" stroke="#dadada" stroke-width="1.15"></path>
<path d="M466.9 365.3L541.9 365.3" stroke="#dadada" stroke-width="1.15"></path>
<path d="M466.9 376.7L541.9 376.7" stroke="#dadada" stroke-width="1.15"></path>
<path d="M466.9 429.5L541.9 429.5" stroke="#dadada" stroke-width="1.15"></path>
<path d="M461.0 371.2L547.8 371.2" stroke="#eaeaea" stroke-width="1.5"></path>
<path d="M497.3 374.0L511.9 374.0" stroke="#c4c4c4" stroke-width="1.7"></path>
<path d="M553.3 353.8L553.3 434.7" stroke="#dadada" stroke-width="1.15"></path>
<path d="M607.2 353.8L607.2 434.7" stroke="#dadada" stroke-width="1.15"></path>
<path d="M553.3 359.5L607.2 359.5" stroke="#dadada" stroke-width="1.15"></path>
<path d="M553.3 429.5L607.2 429.5" stroke="#dadada" stroke-width="1.15"></path>
<path d="M573.0 356.7L587.5 356.7" stroke="#c4c4c4" stroke-width="1.7"></path>
<path d="M705.0 353.8L705.0 434.7" stroke="#dadada" stroke-width="1.15"></path>
<path d="M758.6 353.8L758.6 434.7" stroke="#dadada" stroke-width="1.15"></path>
<path d="M705.0 359.5L758.6 359.5" stroke="#dadada" stroke-width="1.15"></path>
<path d="M705.0 429.5L758.6 429.5" stroke="#dadada" stroke-width="1.15"></path>
<path d="M761.5 356.4L761.5 370.5" stroke="#c4c4c4" stroke-width="1.7"></path>
<path d="M767.2 356.4L767.2 370.5" stroke="#c4c4c4" stroke-width="1.7"></path>
<clipPath id="fc"><rect x="244.7" y="451.4" width="585" height="32"></rect></clipPath>
<path clip-path="url(#fc)" d="M201.81 483.5l31.5 -32.6M232.47 483.5l31.5 -32.6M263.13 483.5l31.5 -32.6M293.79 483.5l31.5 -32.6M324.45 483.5l31.5 -32.6M355.11 483.5l31.5 -32.6M385.77 483.5l31.5 -32.6M416.43 483.5l31.5 -32.6M447.09 483.5l31.5 -32.6M477.75 483.5l31.5 -32.6M508.41 483.5l31.5 -32.6M539.07 483.5l31.5 -32.6M569.73 483.5l31.5 -32.6M600.39 483.5l31.5 -32.6M631.05 483.5l31.5 -32.6M661.71 483.5l31.5 -32.6M692.37 483.5l31.5 -32.6M723.03 483.5l31.5 -32.6M753.69 483.5l31.5 -32.6M784.35 483.5l31.5 -32.6M815.01 483.5l31.5 -32.6" stroke="#9a9a9a" stroke-width="1"></path>
<path clip-path="url(#fc)" d="M217.14 483.5l31.5 -32.6M247.80 483.5l31.5 -32.6M278.46 483.5l31.5 -32.6M309.12 483.5l31.5 -32.6M339.78 483.5l31.5 -32.6M370.44 483.5l31.5 -32.6M401.10 483.5l31.5 -32.6M431.76 483.5l31.5 -32.6M462.42 483.5l31.5 -32.6M493.08 483.5l31.5 -32.6M523.74 483.5l31.5 -32.6M554.40 483.5l31.5 -32.6M585.06 483.5l31.5 -32.6M615.72 483.5l31.5 -32.6M646.38 483.5l31.5 -32.6M677.04 483.5l31.5 -32.6M707.70 483.5l31.5 -32.6M738.36 483.5l31.5 -32.6M769.02 483.5l31.5 -32.6M799.68 483.5l31.5 -32.6" stroke="#c4c4c4" stroke-width="1"></path>
<path d="M244.7 451.4L829.7 451.4" stroke="#e0e0e0" stroke-width="1.2"></path>
<path d="M828.3 436l1.4 0v15h-2.2z" fill="#f0dca0"></path>
</svg>
<div id="bottom" class="abs"></div>
<div class="abs" style="left:0;top:527px;width:1024px;height:1px;background:#d8d8d8"></div>
<div class="abs tb" style="left:0;width:25px"></div><div class="abs tb" style="left:25.500px;width:25px"></div><div class="abs tb" style="left:51px;width:25px"></div><div class="abs tb" style="left:76.500px;width:25px"></div><div class="abs tb" style="left:102px;width:25px"></div><div class="abs tb" style="left:127.500px;width:25px;background:#e4e4e4"></div>
<div class="abs" style="left:154px;top:529.500px;width:211px;height:15px;background:linear-gradient(#f4f4f4,#e2e2e2);border:1px solid #c8c8c8"></div>
<div class="abs" style="left:350.500px;top:530.500px;width:14px;height:13px;border-left:1px solid #c8c8c8;background:#e8e8e8"></div>
<svg class="abs" style="left:354px;top:535px" width="8" height="5" fill="none"><path d="M1 1l2.500 2.500 2.500-2.500" stroke="#666" stroke-width=".8"></path></svg>
<svg class="abs" style="left:157px;top:533px" width="9" height="9"><path d="M1 8v-4l3-2.500 3 2.500v4z" fill="#c03030"></path><circle cx="6.500" cy="2.500" r="1.800" fill="#e8c020"></circle><circle cx="2.500" cy="5" r="1.300" fill="#3070d0"></circle><circle cx="6" cy="6.500" r="1.500" fill="#40a040"></circle></svg>
<div class="abs mt" style="left: 168px; top: 533px; letter-spacing: -1.133px;">1층</div>
<div class="abs tb" style="left:371px;width:23px"></div><div class="abs tb" style="left:397px;width:23px"></div><div class="abs tb" style="left:423px;width:22px"></div><div class="abs tb" style="left:445.500px;width:14px"></div>
<svg class="abs" style="left:371px;top:528px" width="90" height="21" viewBox="371 528 90 21" fill="none"><path d="M382 532.500l-5 5.500h3v6h4v-6h3z" fill="#3a8ae0"></path><path d="M408 544.500l-5-5.500h3v-6h4v6h3z" fill="#3a8ae0"></path><path d="M428 543l8-8" stroke="#e0a010" stroke-width="2.200"></path><path d="M432 533l3.500-1.500 4 3.500-1.500 2z" fill="#f0b818" stroke="#c08800" stroke-width=".5"></path><rect x="451.500" y="537" width="2" height="2" fill="#222"></rect></svg>
<div class="abs" style="left:434px;top:541px;font-size:4.500px;font-weight:bold;color:#333">3D</div>
<div class="abs" style="left:463px;top:529.500px;width:212px;height:15px;background:linear-gradient(#fdfdfd,#f0f0f0);border:1px solid #d0d0d0"></div>
<div class="abs" style="left:465.500px;top:531px;width:6px;height:12px;background:#000"></div>
<div class="abs mt" style="left: 477px; top: 533px; font-size: 7.2px; letter-spacing: -0.202px;">인테리어 - 거실 - 조명</div>
<div class="abs" style="left:659.500px;top:530.500px;width:15px;height:13px;border:1px solid #c8c8c8;background:#e8e8e8"></div>
<svg class="abs" style="left:663px;top:535px" width="8" height="5" fill="none"><path d="M1 1l2.500 2.500 2.500-2.500" stroke="#666" stroke-width=".8"></path></svg>
<div class="abs tb" style="left:680px;width:24px"></div><div class="abs tb" style="left:704.500px;width:15px"></div><div class="abs tb" style="left:722px;width:26px"></div><div class="abs tb" style="left:748.500px;width:11px"></div><div class="abs tb" style="left:762px;width:25px"></div><div class="abs tb" style="left:788px;width:25px;background:#e2e2e2"></div><div class="abs tb" style="left:814px;width:25px"></div><div class="abs tb" style="left:839.500px;width:13px"></div><div class="abs tb" style="left:869px;width:25px"></div><div class="abs tb" style="left:895px;width:25px"></div>
<svg class="abs" style="left:680px;top:528px" width="240" height="21" viewBox="680 528 240 21" fill="none">
<path d="M692 532.500l7.500 3-7.500 3-7.500-3zM684.500 538l7.500 3 7.500-3M684.500 540.500l7.500 3 7.500-3" stroke="#999" stroke-width=".9" fill="#e8e8e8"></path>
<rect x="710.800" y="537" width="2" height="2" fill="#222"></rect>
<path d="M735.300 531.500l5.500 13.500-5.500-3.500-5.500 3.500z" fill="#aaa" stroke="#555" stroke-width="1"></path>
<rect x="752.300" y="537" width="2" height="2" fill="#222"></rect>
<circle cx="774" cy="539" r="5.300" stroke="#222" stroke-width="1.400"></circle><path d="M772 539h7" stroke="#222" stroke-width="1.400"></path><path d="M778 535.500l5 3.500-5 3.500z" fill="#222"></path><circle cx="773" cy="539" r="1.200" fill="#222"></circle>
<path d="M794.500 532v13h13" stroke="#333" stroke-width="1"></path><circle cx="802" cy="538" r="4.500" fill="#333"></circle><path d="M799 536c1-1 3-1 3.500 0s-1 2-.5 3 2.500.5 2.500 2" stroke="#fff" stroke-width=".9"></path><path d="M793 533.500l1.500-1.500 1.500 1.500M806 543.500l1.500 1.500-1.500 1.500" stroke="#333" stroke-width=".8"></path>
<path d="M822 541.500l10-6.500" stroke="#3a8ae0" stroke-width="1.200"></path><rect x="818" y="540" width="3.500" height="3.500" fill="#fff" stroke="#222" stroke-width="1"></rect><rect x="830" y="533" width="3.500" height="3.500" fill="#fff" stroke="#222" stroke-width="1"></rect>
<rect x="845.500" y="537.500" width="1.300" height="1.300" fill="#666"></rect>
<rect x="874.500" y="534" width="14.500" height="10.500" fill="#f09010" stroke="#555" stroke-width=".8"></rect><rect x="875.500" y="535" width="9.500" height="8.500" fill="#f8b020"></rect><path d="M886 535.500h2M886 538h2M886 540.500h2M886 543h2" stroke="#fff" stroke-width="1.200"></path>
<circle cx="907.300" cy="538.500" r="7.300" fill="#e88010" stroke="#c06800" stroke-width=".6"></circle><circle cx="907.300" cy="537" r="5" fill="#f8b040"></circle><ellipse cx="907" cy="534.500" rx="3.200" ry="2" fill="#fde0a8"></ellipse>
</svg>
<div class="abs" style="left:858.500px;top:530px;width:8.500px;height:11px;background:#fff;border:1px solid #bbb"></div><div class="abs" style="left:861.300px;top:534.500px;width:0;height:0;border-left:1.500px solid transparent;border-right:1.500px solid transparent;border-top:2px solid #444"></div>
<div class="abs" style="left:921px;top:529px;width:101px;height:18px;background:#f8f8fa"></div>
<div class="abs mt" style="left: 925px; top: 534.5px; font-size: 7px; letter-spacing: -0.22px;">(x) 22339.8</div><div class="abs mt" style="left: 965px; top: 534.5px; font-size: 7px; letter-spacing: -0.202px;">(y) 9667.5 mm</div>
<svg class="abs" style="left:0;top:528px" width="153" height="21" viewBox="0 528 153 21" fill="none">
<circle cx="12" cy="539.500" r="5.600" stroke="#222" stroke-width="2.600" stroke-dasharray="2.950 2.920"></circle><circle cx="12" cy="539.500" r="4.600" stroke="#222" stroke-width="1.600"></circle><circle cx="12" cy="539.500" r="2.600" stroke="#555" stroke-width=".8" fill="#eee"></circle>
<g fill="#888"><rect x="30.500" y="533.500" width="3" height="3"></rect><rect x="35.500" y="533.500" width="3" height="3"></rect><rect x="40.500" y="533.500" width="3" height="3"></rect><rect x="30.500" y="538.500" width="3" height="3"></rect><rect x="35.500" y="538.500" width="3" height="3"></rect><rect x="40.500" y="538.500" width="3" height="3"></rect><rect x="30.500" y="543.500" width="3" height="3"></rect><rect x="35.500" y="543.500" width="3" height="3"></rect><rect x="40.500" y="543.500" width="3" height="3"></rect></g>
<g transform="rotate(-45 63 540)"><path d="M58.500 535v4.500a4.500 4.500 0 0 0 9 0v-4.500" stroke="#e03828" stroke-width="3.400"></path><path d="M58.500 533.500v2.200M67.500 533.500v2.200" stroke="#d0d0d0" stroke-width="3.400"></path></g>
<path d="M81 546.500v-14M81 546.500l5-13.500M81 546.500l10-10.500M81 546.500l14-5.500M81 546.500h15" stroke="#888" stroke-width=".8"></path>
<path d="M107.500 533.500h7l3.500 3.500v9h-10.500z" fill="#fff" stroke="#777" stroke-width="1"></path><path d="M114.500 533.500v3.500h3.500" stroke="#777" stroke-width="1"></path><path d="M114 538.500v8l2-1.800 1.500 3 1.300-.6-1.500-3h2.700z" fill="#222"></path>
<path d="M131.500 535.500l9-2.500 9 2.500v8l-9 3-9-3z" fill="#e8e8e8" stroke="#666" stroke-width="1"></path><path d="M131.500 535.500l9 2.500 9-2.500M140.500 538v8.500" stroke="#666" stroke-width=".8"></path><path d="M131.500 541l9 3 9-3v2.500l-9 3-9-3z" fill="#555"></path>
</svg>
<!-- floating -->
<div class="abs" style="left:405.500px;top:507.500px;width:64px;height:16px;background:#edf3fa;border:1px solid #cfdcea;border-radius:2px"></div>
<svg class="abs" style="left:462px;top:508px" width="7" height="7"><path d="M1 0h6v6z" fill="#bbb"></path><path d="M3 0l4 4" stroke="#888" stroke-width=".6"></path></svg>
<div class="abs mt" style="left: 409.5px; top: 511.5px; font-size: 7px; letter-spacing: -0.487px;">Enter</div><div class="abs mt" style="left: 440px; top: 511.5px; font-size: 7px; letter-spacing: -1.302px;">ESC</div>

<div class="abs" style="left:528px;top:98px;width:97px;height:11.500px;background:#8ec8ec;border-radius:0 0 2px 2px"></div>
<div class="abs mt" style="left: 534.5px; top: 99.5px; font-size: 7.2px; color: rgb(17, 34, 51); letter-spacing: -0.398px;">2024_Kitchen -&nbsp; - 1층 (0 mm)</div>
<div class="abs" style="left:997.500px;top:98px;width:24.500px;height:11.500px;background:#8ec8ec;border-radius:0 0 0 2px"></div>
<svg class="abs" style="left:998px;top:98px" width="24" height="12" fill="none"><path d="M3 7.500h3.500" stroke="#123" stroke-width="1.300"></path><path d="M9.500 4.500h4v3.500h-4zM10.500 4.500v-1.200h4v3.500h-1" stroke="#123" stroke-width="1"></path><path d="M16.500 3l4.500 5M21 3l-4.500 5" stroke="#123" stroke-width="1.400"></path></svg>
<div class="abs" style="left:1022px;top:98px;width:2px;height:429px;background:#e8e8ec"></div>
<div class="abs" style="left:172px;top:97px;width:852px;height:1px;background:#fff"></div>


</body></html>
